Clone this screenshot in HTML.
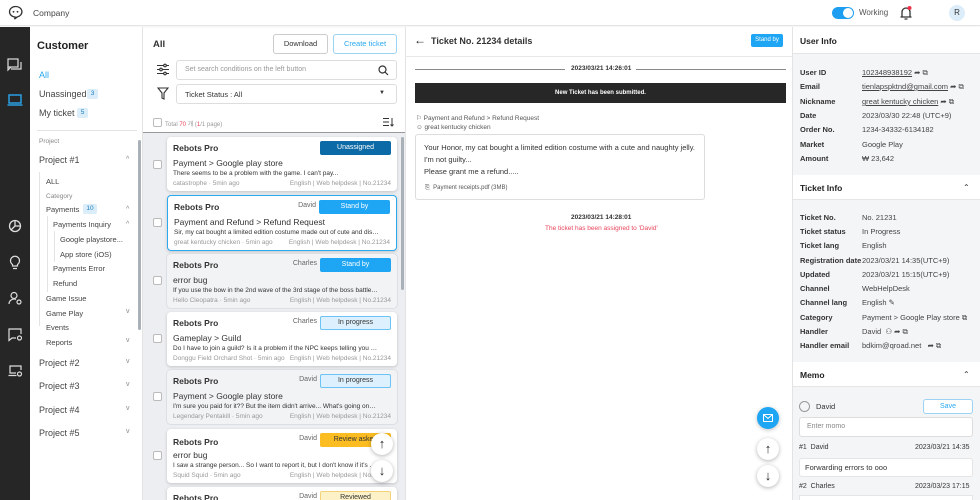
<!DOCTYPE html>
<html style="width:980px;height:500px;overflow:hidden"><head><meta charset="utf-8"><style>
*{box-sizing:border-box;margin:0;padding:0;white-space:nowrap}
body{width:980px;height:500px;overflow:hidden;font-family:"Liberation Sans","Noto Sans CJK KR",sans-serif;color:#333;background:#fff;position:relative;font-size:9px}
.a{position:absolute;white-space:nowrap}
.b{font-weight:bold}
.card{position:absolute;left:167px;width:230px;height:54px;background:#fff;border-radius:4px;box-shadow:0 1px 3px rgba(0,0,0,.18);overflow:hidden}
.card.g{background:#f2f3f5;box-shadow:0 0 0 1px #dcdfe3}
.card.sel{border:1.5px solid #2aa8f0}
.card .t{position:absolute;left:6px;top:6px;font-weight:bold;font-size:8.5px;color:#333}
.card .s{position:absolute;left:6px;top:21px;font-size:8.5px;color:#333}
.card .d{position:absolute;left:6px;top:33px;font-size:6.5px;color:#333;width:205px;overflow:hidden;text-overflow:ellipsis}
.card .m{position:absolute;left:6px;top:43px;font-size:6.5px;color:#999}
.card .r{position:absolute;right:6px;top:43px;font-size:6.5px;color:#999}
.card .n{position:absolute;right:80px;top:6px;font-size:7px;color:#666}
.badge{position:absolute;right:6px;top:4px;width:71px;height:14px;border-radius:2px;font-size:7px;text-align:center;line-height:14px;color:#fff;overflow:hidden}
.cb{position:absolute;left:153px;width:9px;height:9px;border:1px solid #bbb;border-radius:2px;background:#fff}
.row{position:absolute;left:800px;font-size:7.5px}
.row b{position:absolute;left:0;color:#333}
.row span{position:absolute;left:62px;color:#444;white-space:nowrap}
.chev{position:absolute;font-size:7px;color:#888}
</style></head><body>
<div class="a" style="left:0;top:0;width:980px;height:26px;background:#fff;border-bottom:1px solid #e5e5e5;box-shadow:0 1px 2px rgba(0,0,0,.06)"></div>
<svg class="a" style="left:8px;top:5px" width="15" height="15" viewBox="0 0 15 15"><path d="M7.5 1.5a6 5.3 0 1 0 0 10.6l-1 2 3-2.2a6 5.3 0 0 0-2-10.4z" fill="none" stroke="#333" stroke-width="1.3"/><circle cx="5.5" cy="6.8" r=".9" fill="#333"/><circle cx="9.5" cy="6.8" r=".9" fill="#333"/></svg>
<div class="a" style="left:33px;top:8px;font-size:8.5px;color:#444">Company</div>
<div class="a" style="left:832px;top:7px;width:22px;height:12px;border-radius:6px;background:#1e9ef0"></div>
<div class="a" style="left:843px;top:8px;width:10px;height:10px;border-radius:5px;background:#fff"></div>
<div class="a" style="left:859px;top:8px;font-size:8px;color:#555">Working</div>
<svg class="a" style="left:899px;top:5px" width="14" height="16" viewBox="0 0 14 16"><path d="M3 12V7a4 4 0 0 1 8 0v5h1.5H1.5z M5.5 14h3" fill="none" stroke="#333" stroke-width="1.3"/><circle cx="10.5" cy="3" r="2" fill="#f0304a"/></svg>
<div class="a" style="left:949px;top:5px;width:16px;height:16px;border-radius:8px;background:#dcecf8;font-size:8px;text-align:center;line-height:16px;color:#333">R</div>
<div class="a" style="left:0;top:27px;width:30px;height:473px;background:#262626"></div>
<svg class="a" style="left:7px;top:57px" width="16" height="16" viewBox="0 0 16 16" fill="none" stroke="#ddd" stroke-width="1.2"><rect x="1" y="2" width="10" height="8"/><path d="M4 12h10V5M1 10l-0 3 3-3"/></svg>
<svg class="a" style="left:7px;top:92px" width="16" height="16" viewBox="0 0 16 16" fill="none" stroke="#2aa8f0" stroke-width="1.4"><rect x="2" y="3" width="12" height="8"/><path d="M0.5 13h15"/></svg>
<svg class="a" style="left:8px;top:219px" width="14" height="14" viewBox="0 0 14 14" fill="none" stroke="#ddd" stroke-width="1.3"><circle cx="7" cy="7" r="5.5"/><path d="M7 1.5V7h5.5M7 7 3 11"/></svg>
<svg class="a" style="left:8px;top:255px" width="14" height="15" viewBox="0 0 14 15" fill="none" stroke="#ddd" stroke-width="1.2"><path d="M4.5 9.5a4.5 4.5 0 1 1 5 0V11h-5z M5 13.5h4"/></svg>
<svg class="a" style="left:8px;top:291px" width="15" height="15" viewBox="0 0 15 15" fill="none" stroke="#ddd" stroke-width="1.2"><circle cx="6" cy="4.5" r="3"/><path d="M1 13a5 5 0 0 1 7-4.5"/><circle cx="11" cy="11" r="2"/></svg>
<svg class="a" style="left:8px;top:327px" width="15" height="15" viewBox="0 0 15 15" fill="none" stroke="#ddd" stroke-width="1.2"><path d="M8 11H4l-3 2.5V2h12v5"/><circle cx="11.5" cy="11" r="2"/></svg>
<svg class="a" style="left:8px;top:363px" width="15" height="15" viewBox="0 0 15 15" fill="none" stroke="#ddd" stroke-width="1.2"><path d="M8 10H2V3h11v4M0.5 12.5h8"/><circle cx="11.5" cy="11" r="2"/></svg>
<div class="a" style="left:30px;top:27px;width:113px;height:473px;background:#fff;border-right:1px solid #e3e3e3"></div>
<div class="a b" style="left:37px;top:40px;font-size:11px;color:#222">Customer</div>
<div class="a" style="left:39px;top:70px;font-size:9px;color:#2aa8f0">All</div>
<div class="a" style="left:39px;top:89px;font-size:9px;color:#444">Unassinged</div>
<div class="a" style="left:87px;top:89px;width:11px;height:10px;background:#dcedfa;color:#1b7fc4;font-size:6.5px;text-align:center;line-height:10px;border-radius:2px">3</div>
<div class="a" style="left:39px;top:108px;font-size:9px;color:#444">My ticket</div>
<div class="a" style="left:77px;top:108px;width:11px;height:10px;background:#dcedfa;color:#1b7fc4;font-size:6.5px;text-align:center;line-height:10px;border-radius:2px">5</div>
<div class="a" style="left:37px;top:130px;width:100px;height:1px;background:#e3e3e3"></div>
<div class="a" style="left:39px;top:138px;font-size:6.5px;color:#888">Project</div>
<div class="a" style="left:39px;top:155px;font-size:9px;color:#444">Project #1</div><div class="chev" style="left:126px;top:156px">^</div>
<div class="a" style="left:39px;top:172px;width:1px;height:154px;background:#e3e3e3"></div>
<div class="a" style="left:46px;top:177px;font-size:7.5px;color:#444">ALL</div>
<div class="a" style="left:46px;top:193px;font-size:6.5px;color:#888">Category</div>
<div class="a" style="left:46px;top:205px;font-size:7.5px;color:#444">Payments</div>
<div class="a" style="left:83px;top:204px;width:14px;height:10px;background:#dcedfa;color:#1b7fc4;font-size:6.5px;text-align:center;line-height:10px;border-radius:2px">10</div><div class="chev" style="left:126px;top:206px">^</div>
<div class="a" style="left:53px;top:220px;font-size:7.5px;color:#444">Payments Inquiry</div><div class="chev" style="left:126px;top:221px">^</div>
<div class="a" style="left:47px;top:216px;width:1px;height:76px;background:#e3e3e3"></div>
<div class="a" style="left:54px;top:231px;width:1px;height:31px;background:#e3e3e3"></div>
<div class="a" style="left:60px;top:235px;font-size:7.5px;color:#444">Google playstore...</div>
<div class="a" style="left:60px;top:250px;font-size:7.5px;color:#444">App store (iOS)</div>
<div class="a" style="left:53px;top:264px;font-size:7.5px;color:#444">Payments Error</div>
<div class="a" style="left:53px;top:279px;font-size:7.5px;color:#444">Refund</div>
<div class="a" style="left:46px;top:294px;font-size:7.5px;color:#444">Game Issue</div>
<div class="a" style="left:46px;top:309px;font-size:7.5px;color:#444">Game Play</div><div class="chev" style="left:126px;top:308px">v</div>
<div class="a" style="left:46px;top:323px;font-size:7.5px;color:#444">Events</div>
<div class="a" style="left:46px;top:338px;font-size:7.5px;color:#444">Reports</div><div class="chev" style="left:126px;top:337px">v</div>
<div class="a" style="left:39px;top:358px;font-size:9px;color:#444">Project #2</div><div class="chev" style="left:126px;top:358px">v</div>
<div class="a" style="left:39px;top:381px;font-size:9px;color:#444">Project #3</div><div class="chev" style="left:126px;top:381px">v</div>
<div class="a" style="left:39px;top:405px;font-size:9px;color:#444">Project #4</div><div class="chev" style="left:126px;top:405px">v</div>
<div class="a" style="left:39px;top:428px;font-size:9px;color:#444">Project #5</div><div class="chev" style="left:126px;top:428px">v</div>
<div class="a" style="left:138px;top:140px;width:3px;height:190px;background:#aab0b8;border-radius:2px"></div>
<div class="a" style="left:143px;top:132px;width:262px;height:368px;background:#eceef1;border-top:1.5px solid #999"></div>
<div class="a b" style="left:153px;top:39px;font-size:9.5px;color:#333">All</div>
<div class="a" style="left:273px;top:34px;width:55px;height:20px;border:1px solid #ccc;border-radius:3px;font-size:7.5px;text-align:center;line-height:18px;color:#333">Download</div>
<div class="a" style="left:333px;top:34px;width:64px;height:20px;border:1px solid #9cd3f5;border-radius:3px;font-size:7.5px;text-align:center;line-height:18px;color:#2aa8f0">Create ticket</div>
<svg class="a" style="left:156px;top:63px" width="14" height="13" viewBox="0 0 14 13" fill="none" stroke="#333" stroke-width="1.1"><path d="M1 2.5h12M1 6.5h12M1 10.5h12"/><circle cx="9" cy="2.5" r="1.3" fill="#fff"/><circle cx="5" cy="6.5" r="1.3" fill="#fff"/><circle cx="9" cy="10.5" r="1.3" fill="#fff"/></svg>
<div class="a" style="left:176px;top:60px;width:221px;height:20px;border:1px solid #ddd;border-radius:3px"></div>
<div class="a" style="left:185px;top:66px;font-size:7px;color:#999">Set search conditions on the left button</div>
<svg class="a" style="left:378px;top:65px" width="11" height="11" viewBox="0 0 11 11" fill="none" stroke="#333" stroke-width="1.2"><circle cx="4.5" cy="4.5" r="3.5"/><path d="M7 7l3 3"/></svg>
<svg class="a" style="left:157px;top:87px" width="12" height="13" viewBox="0 0 12 13" fill="none" stroke="#333" stroke-width="1.1"><path d="M1 1h10L7 6v6L5 11V6z"/></svg>
<div class="a" style="left:176px;top:84px;width:221px;height:20px;border:1px solid #ddd;border-radius:3px"></div>
<div class="a" style="left:185px;top:90px;font-size:7.5px;color:#333">Ticket Status : All</div>
<div class="a" style="left:379px;top:90px;font-size:6px;color:#333">▼</div>
<div class="a" style="left:153px;top:118px;width:9px;height:9px;border:1px solid #bbb;border-radius:2px"></div>
<div class="a" style="left:165px;top:119px;font-size:6px;color:#999">Total <span style="color:#e8455b">70</span> 개 (<span style="color:#e8455b">1</span>/1 page)</div>
<svg class="a" style="left:383px;top:117px" width="11" height="10" viewBox="0 0 11 10" fill="none" stroke="#333" stroke-width="1"><path d="M0 1.5h6M0 5h6M0 8.5h6M9 1v8M7.5 7.5 9 9l1.5-1.5"/></svg>
<div class="a" style="left:401px;top:137px;width:3px;height:153px;background:#aab0b8;border-radius:2px"></div>

<div class="cb" style="top:160px"></div>
<div class="card" style="top:137px"><div class="t">Rebots Pro</div><div class="badge" style="background:#0c6aa6">Unassigned</div><div class="s">Payment &gt; Google play store</div><div class="d">There seems to be a problem with the game. I can't pay...</div><div class="m">catastrophe · 5min ago</div><div class="r">English | Web helpdesk | No.21234</div></div>
<div class="cb" style="top:218px"></div>
<div class="card sel" style="top:195px;height:56px"><div class="t">Rebots Pro</div><div class="n">David</div><div class="badge" style="background:#1ea5f3">Stand by</div><div class="s">Payment and Refund &gt; Refund Request</div><div class="d">Sir, my cat bought a limited edition costume made out of cute and disg···</div><div class="m">great kentucky chicken · 5min ago</div><div class="r">English | Web helpdesk | No.21234</div></div>
<div class="cb" style="top:276px"></div>
<div class="card g" style="top:254px"><div class="t">Rebots Pro</div><div class="n">Charles</div><div class="badge" style="background:#1ea5f3">Stand by</div><div class="s">error bug</div><div class="d">If you use the bow in the 2nd wave of the 3rd stage of the boss battle, y···</div><div class="m">Hello Cleopatra · 5min ago</div><div class="r">English | Web helpdesk | No.21234</div></div>
<div class="cb" style="top:334px"></div>
<div class="card" style="top:312px"><div class="t">Rebots Pro</div><div class="n">Charles</div><div class="badge" style="background:#ddf0fd;border:1px solid #6cc3f5;color:#333;line-height:12px">In progress</div><div class="s">Gameplay &gt; Guild</div><div class="d">Do I have to join a guild? Is it a problem if the NPC keeps telling you to j···</div><div class="m">Donggu Field Orchard Shot · 5min ago</div><div class="r">English | Web helpdesk | No.21234</div></div>
<div class="cb" style="top:392px"></div>
<div class="card g" style="top:370px"><div class="t">Rebots Pro</div><div class="n">David</div><div class="badge" style="background:#ddf0fd;border:1px solid #6cc3f5;color:#333;line-height:12px">In progress</div><div class="s">Payment &gt; Google play store</div><div class="d">I'm sure you paid for it?? But the item didn't arrive... What's going on?···</div><div class="m">Legendary Pentakill · 5min ago</div><div class="r">English | Web helpdesk | No.21234</div></div>
<div class="cb" style="top:451px"></div>
<div class="card" style="top:429px"><div class="t" style="top:8px">Rebots Pro</div><div class="n">David</div><div class="badge" style="background:#fbbd21;color:#333">Review asked</div><div class="s">error bug</div><div class="d">I saw a strange person... So I want to report it, but I don't know if it's ri···</div><div class="m">Squid Squid · 5min ago</div><div class="r">English | Web helpdesk | No.21234</div></div>
<div class="card" style="top:487px;height:13px;border-radius:4px 4px 0 0"><div class="t">Rebots Pro</div><div class="n">David</div><div class="badge" style="background:#fdf1c7;border:1px solid #f3d27a;color:#333;line-height:12px">Reviewed</div></div>
<div class="a" style="left:371px;top:433px;width:22px;height:22px;border-radius:11px;background:#fff;box-shadow:0 1px 4px rgba(0,0,0,.3);text-align:center;line-height:22px;font-size:13px;color:#222">↑</div>
<div class="a" style="left:371px;top:460px;width:22px;height:22px;border-radius:11px;background:#fff;box-shadow:0 1px 4px rgba(0,0,0,.3);text-align:center;line-height:22px;font-size:13px;color:#222">↓</div>
<div class="a" style="left:405px;top:27px;width:387px;height:473px;background:#fff;border-left:1px solid #e3e3e3"></div>
<div class="a" style="left:405px;top:56px;width:387px;height:1px;background:#e8e8e8"></div>
<div class="a" style="left:414px;top:33px;font-size:12px;color:#222">←</div>
<div class="a b" style="left:431px;top:36px;font-size:9px;color:#333">Ticket No. 21234 details</div>
<div class="a" style="left:751px;top:34px;width:32px;height:13px;background:#1ea5f3;border-radius:2px;color:#fff;font-size:6px;text-align:center;line-height:13px">Stand by</div>
<div class="a" style="left:415px;top:69px;width:150px;height:1px;background:#888"></div>
<div class="a" style="left:636px;top:69px;width:150px;height:1px;background:#888"></div>
<div class="a b" style="left:571px;top:65px;font-size:6.5px;color:#333">2023/03/21 14:26:01</div>
<div class="a" style="left:415px;top:83px;width:371px;height:20px;background:#272727;color:#fff;font-size:6px;font-weight:bold;text-align:center;line-height:20px">New Ticket has been submitted.</div>
<div class="a" style="left:416px;top:114px;font-size:6.5px;color:#555">⚐ Payment and Refund &gt; Refund Request</div>
<div class="a" style="left:416px;top:124px;font-size:6.5px;color:#555">☺ great kentucky chicken</div>
<div class="a" style="left:415px;top:134px;width:290px;height:66px;border:1px solid #ddd;border-radius:3px"></div>
<div class="a" style="left:424px;top:142px;font-size:7.5px;color:#333;line-height:12px">Your Honor, my cat bought a limited edition costume with a cute and naughty jelly.<br>I'm not guilty...<br>Please grant me a refund.....</div>
<div class="a" style="left:425px;top:185px;font-size:6px;color:#555">⎘ &nbsp;Payment receipts.pdf (3MB)</div>
<div class="a b" style="left:571px;top:214px;font-size:6.5px;color:#333">2023/03/21 14:28:01</div>
<div class="a" style="left:545px;top:225px;font-size:6.5px;color:#e8455b">The ticket has been assigned to 'David'</div>
<div class="a" style="left:757px;top:407px;width:22px;height:22px;border-radius:11px;background:#1ea5f3;box-shadow:0 1px 4px rgba(0,0,0,.25)"></div>
<svg class="a" style="left:763px;top:414px" width="10" height="8" viewBox="0 0 10 8" fill="none" stroke="#fff" stroke-width="1"><rect x=".5" y=".5" width="9" height="7"/><path d="M.5 .5 5 4.5 9.5.5"/></svg>
<div class="a" style="left:757px;top:438px;width:22px;height:22px;border-radius:11px;background:#fff;box-shadow:0 1px 4px rgba(0,0,0,.3);text-align:center;line-height:22px;font-size:13px;color:#222">↑</div>
<div class="a" style="left:757px;top:465px;width:22px;height:22px;border-radius:11px;background:#fff;box-shadow:0 1px 4px rgba(0,0,0,.3);text-align:center;line-height:22px;font-size:13px;color:#222">↓</div>
<div class="a" style="left:792px;top:27px;width:188px;height:473px;background:#f4f5f7;border-left:1px solid #e3e3e3"></div>
<div class="a" style="left:793px;top:27px;width:187px;height:27px;background:#fff;border-bottom:1px solid #e5e5e5"></div>
<div class="a b" style="left:800px;top:36px;font-size:8.5px;color:#222">User Info</div>
<div class="row" style="top:68px"><b>User ID</b><span><u>102348938192</u> ➦ ⧉</span></div>
<div class="row" style="top:82px"><b>Email</b><span><u>tienlapspktnd@gmail.com</u> ➦ ⧉</span></div>
<div class="row" style="top:97px"><b>Nickname</b><span><u>great kentucky chicken</u> ➦ ⧉</span></div>
<div class="row" style="top:111px"><b>Date</b><span>2023/03/30 22:48 (UTC+9)</span></div>
<div class="row" style="top:125px"><b>Order No.</b><span>1234-34332-6134182</span></div>
<div class="row" style="top:140px"><b>Market</b><span>Google Play</span></div>
<div class="row" style="top:154px"><b>Amount</b><span>₩ 23,642</span></div>
<div class="a" style="left:793px;top:175px;width:187px;height:25px;background:#fff;border-bottom:1px solid #e5e5e5"></div>
<div class="a b" style="left:800px;top:183px;font-size:8.5px;color:#222">Ticket Info</div><div class="a" style="left:963px;top:183px;font-size:8px">⌃</div>
<div class="row" style="top:213px"><b>Ticket No.</b><span>No. 21231</span></div>
<div class="row" style="top:227px"><b>Ticket status</b><span>In Progress</span></div>
<div class="row" style="top:241px"><b>Ticket lang</b><span>English</span></div>
<div class="row" style="top:256px"><b>Registration date</b><span>2023/03/21 14:35(UTC+9)</span></div>
<div class="row" style="top:270px"><b>Updated</b><span>2023/03/21 15:15(UTC+9)</span></div>
<div class="row" style="top:284px"><b>Channel</b><span>WebHelpDesk</span></div>
<div class="row" style="top:298px"><b>Channel lang</b><span>English ✎</span></div>
<div class="row" style="top:313px"><b>Category</b><span>Payment &gt; Google Play store ⧉</span></div>
<div class="row" style="top:327px"><b>Handler</b><span>David &nbsp;⚇ ➦ ⧉</span></div>
<div class="row" style="top:341px"><b>Handler email</b><span>bdkim@qroad.net &nbsp; ➦ ⧉</span></div>
<div class="a" style="left:793px;top:362px;width:187px;height:25px;background:#fff;border-bottom:1px solid #e5e5e5"></div>
<div class="a b" style="left:800px;top:370px;font-size:8.5px;color:#222">Memo</div><div class="a" style="left:963px;top:370px;font-size:8px">⌃</div>
<div class="a" style="left:799px;top:401px;width:11px;height:11px;border:1px solid #999;border-radius:6px"></div>
<div class="a" style="left:816px;top:402px;font-size:7.5px;color:#333">David</div>
<div class="a" style="left:923px;top:399px;width:50px;height:15px;border:1px solid #9cd3f5;border-radius:3px;background:#fff;color:#2aa8f0;font-size:7px;text-align:center;line-height:13px">Save</div>
<div class="a" style="left:799px;top:417px;width:174px;height:20px;border:1px solid #ddd;border-radius:3px;background:#fff"></div>
<div class="a" style="left:807px;top:423px;font-size:7px;color:#888">Enter momo</div>
<div class="a" style="left:799px;top:444px;font-size:7px;color:#333">#1 &nbsp;David</div>
<div class="a" style="left:915px;top:444px;font-size:7px;color:#333">2023/03/21 14:35</div>
<div class="a" style="left:799px;top:458px;width:174px;height:19px;border:1px solid #e5e5e5;border-radius:3px;background:#fff"></div>
<div class="a" style="left:805px;top:463px;font-size:7.5px;color:#333">Forwarding errors to ooo</div>
<div class="a" style="left:799px;top:483px;font-size:7px;color:#333">#2 &nbsp;Charles</div>
<div class="a" style="left:915px;top:483px;font-size:7px;color:#333">2023/03/23 17:15</div>
<div class="a" style="left:799px;top:495px;width:174px;height:5px;border:1px solid #e5e5e5;border-bottom:none;background:#fff"></div>
</body></html>
